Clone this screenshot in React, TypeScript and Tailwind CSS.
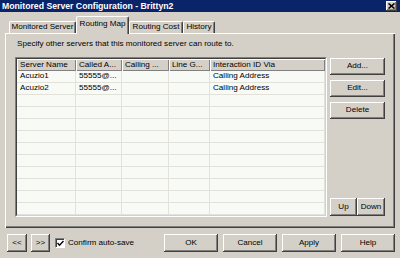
import React from "react"

const raised =
  "bg-[#d4d0c8] shadow-[inset_-1px_-1px_#404040,inset_1px_1px_#ffffff,inset_-2px_-2px_#808080]"

function Btn({ label, className }: { label: string; className: string }) {
  return (
    <button type="button" className={`flex items-center justify-center text-black ${raised} ${className}`}>
      {label}
    </button>
  )
}

const columns = [
  { name: "Server Name", width: "w-[59px]" },
  { name: "Called A...", width: "w-[46px]" },
  { name: "Calling ...", width: "w-[47px]" },
  { name: "Line G...", width: "w-[41px]" },
  { name: "Interaction ID Via", width: "flex-1" },
]

const rows = [
  ["Acuzio1", "55555@...", "", "", "Calling Address"],
  ["Acuzio2", "55555@...", "", "", "Calling Address"],
  ...Array.from({ length: 10 }, () => ["", "", "", "", ""]),
]

const tabs = [
  { label: "Monitored Server", width: "w-[67px]" },
  { label: "Routing Map", width: "w-[53px]", active: true },
  { label: "Routing Cost", width: "w-[54px]" },
  { label: "History", width: "w-[32px]" },
]

export default function App() {
  return (
    <div className="flex h-[258px] w-[400px] flex-col overflow-hidden bg-[#d4d0c8] font-['Liberation_Sans',Arial,sans-serif] text-[8.1px] text-black">
      {/* title bar */}
      <div className="flex h-[12px] items-center justify-between bg-[#0a246a] pl-[2px] pr-[3px]">
        <span className="whitespace-nowrap text-[8.7px] font-bold leading-none text-white">
          Monitored Server Configuration - Brittyn2
        </span>
        <div className={`flex h-[10px] w-[11px] items-center justify-center ${raised}`}>
          <svg width="7" height="6" viewBox="0 0 7 6">
            <path d="M0.5 0.5 L6.5 5.5 M6.5 0.5 L0.5 5.5" stroke="#000" strokeWidth="1.6" />
          </svg>
        </div>
      </div>

      {/* tabs */}
      <div className="mt-[4px] flex h-[17px] items-end pl-[9px]">
        {tabs.map((tab) => (
          <div
            key={tab.label}
            className={
              tab.active
                ? `relative z-10 -mb-px flex h-[18px] ${tab.width} items-center justify-center whitespace-nowrap rounded-t-[2px] border-l border-t border-r border-l-white border-t-white border-r-[#404040] bg-[#d4d0c8] pb-[2px] shadow-[inset_-1px_0_#808080]`
                : `flex h-[12px] ${tab.width} items-center justify-center whitespace-nowrap rounded-t-[2px] border-l border-t border-r border-l-white border-t-white border-r-[#404040] bg-[#d4d0c8] shadow-[inset_-1px_0_#808080]`
            }
          >
            <span className="leading-none">{tab.label}</span>
          </div>
        ))}
      </div>

      {/* panel */}
      <div className="ml-[5px] flex h-[195px] w-[390px] flex-col pl-[10px] shadow-[inset_1px_1px_#ffffff,inset_-1px_-1px_#404040,inset_-2px_-2px_#808080]">
        <div className="mt-[5px] h-[12px] whitespace-nowrap pl-[2px] leading-[12px]">
          Specify other servers that this monitored server can route to.
        </div>
        <div className="mt-[7px] flex gap-[3px]">
          {/* list view */}
          <div className="flex h-[160px] w-[312px] flex-col border border-[#808080] border-b-white border-r-white">
            <div className="flex h-full flex-col border border-[#404040] border-b-[#d4d0c8] border-r-[#d4d0c8] bg-[#f7faf5]">
              <div className="flex h-[12px] shrink-0">
                {columns.map((col) => (
                  <div
                    key={col.name}
                    className={`${col.width} flex items-center overflow-hidden whitespace-nowrap bg-[#d4d0c8] pl-[3px] shadow-[inset_1px_1px_#ffffff,inset_-1px_-1px_#808080]`}
                  >
                    {col.name}
                  </div>
                ))}
              </div>
              {rows.map((row, i) => (
                <div key={i} className="flex h-[12px] shrink-0 border-b border-[#e2e2da]">
                  {row.map((cell, j) => (
                    <div
                      key={j}
                      className={`${columns[j].width} flex items-center overflow-hidden whitespace-nowrap border-r border-[#e2e2da] pl-[3px]`}
                    >
                      {cell}
                    </div>
                  ))}
                </div>
              ))}
            </div>
          </div>

          {/* side buttons */}
          <div className="flex h-[160px] w-[55px] flex-col pt-[1px]">
            <Btn label="Add..." className="h-[17px] w-[55px]" />
            <Btn label="Edit..." className="mt-[5px] h-[17px] w-[55px]" />
            <Btn label="Delete" className="mt-[5px] h-[17px] w-[55px]" />
            <div className="mt-auto mb-[1px] flex">
              <Btn label="Up" className="h-[18px] w-[27px]" />
              <Btn label="Down" className="h-[18px] w-[28px]" />
            </div>
          </div>
        </div>
      </div>

      {/* bottom bar */}
      <div className="mt-[6px] flex h-[18px] items-center pl-[7px]">
        <Btn label="<<" className="h-[18px] w-[20px]" />
        <Btn label=">>" className="ml-[4px] h-[18px] w-[19px]" />
        <div className="ml-[5px] flex h-[10px] w-[10px] items-center justify-center border border-[#808080] border-b-white border-r-white bg-white shadow-[inset_1px_1px_#404040]">
          <svg width="7" height="7" viewBox="0 0 7 7">
            <path d="M0.5 3 L2.5 5.2 L6.5 1" stroke="#000" strokeWidth="1.4" fill="none" />
          </svg>
        </div>
        <span className="ml-[3px]">Confirm auto-save</span>
        <div className="ml-auto mr-[5px] flex gap-[5px]">
          <Btn label="OK" className="h-[18px] w-[54px]" />
          <Btn label="Cancel" className="h-[18px] w-[54px]" />
          <Btn label="Apply" className="h-[18px] w-[54px]" />
          <Btn label="Help" className="h-[18px] w-[54px]" />
        </div>
      </div>
    </div>
  )
}
